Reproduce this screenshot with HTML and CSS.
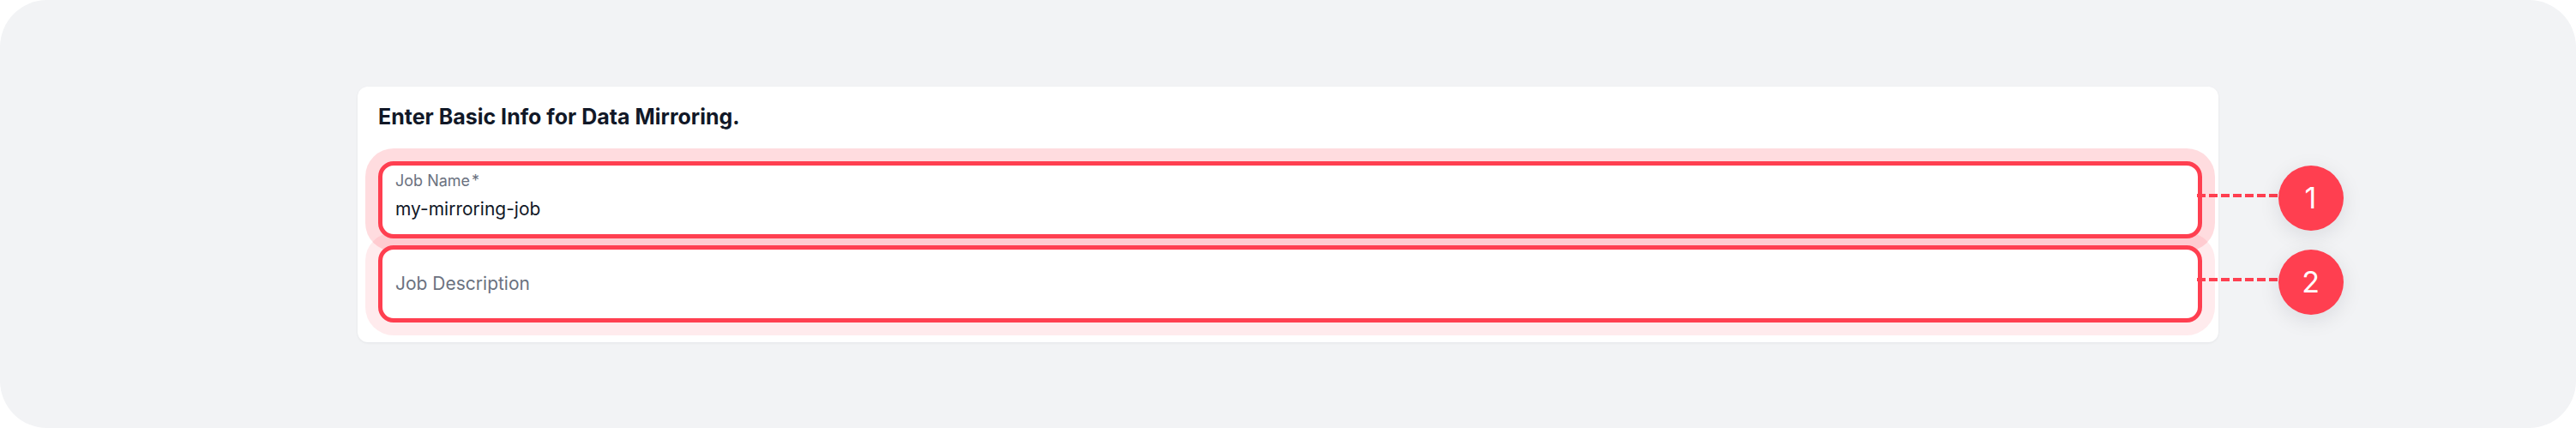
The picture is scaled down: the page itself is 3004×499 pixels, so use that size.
FILE: index.html
```html
<!DOCTYPE html>
<html lang="en">
<head>
<meta charset="utf-8">
<title>Enter Basic Info for Data Mirroring</title>
<link rel="stylesheet" href="styles.css">
</head>
<body>
<div class="screen">
  <div class="card">
    <h1 class="card-title">Enter Basic Info for Data Mirroring.</h1>
    <div class="fields">
      <div class="field-wrap ring-strong">
        <div class="field field-filled">
          <div class="field-label">Job Name<span class="req">*</span></div>
          <div class="field-value">my-mirroring-job</div>
        </div>
        <span class="callout-line"></span>
        <span class="callout-badge">1</span>
      </div>
      <div class="field-wrap ring-soft">
        <div class="field field-empty">
          <div class="field-placeholder">Job Description</div>
        </div>
        <span class="callout-line"></span>
        <span class="callout-badge">2</span>
      </div>
    </div>
  </div>
</div>
</body>
</html>
```
FILE: styles.css
```css
* { box-sizing: border-box; }

html, body {
  margin: 0;
  padding: 0;
  background: #ffffff;
}

body {
  font-family: Inter, "Noto Sans", "Liberation Sans", sans-serif;
}

.screen {
  width: 3004px;
  height: 499px;
  background: #f2f3f5;
  border-radius: 55px;
  display: flex;
  align-items: center;
  justify-content: center;
}

.card {
  width: 2170px;
  background: #ffffff;
  border-radius: 12px;
  box-shadow: 0 1px 3px rgba(17, 24, 39, 0.06);
  padding: 24px 19px 23px 24px;
}

.card-title {
  margin: 0;
  font-size: 25px;
  line-height: 22px;
  font-weight: 700;
  color: #111827;
}

.fields {
  margin-top: 41px;
  display: flex;
  flex-direction: column;
  gap: 8px;
}

.field-wrap {
  position: relative;
}

.field-wrap::before {
  content: "";
  position: absolute;
  left: -15px;
  right: -15px;
  top: -15px;
  bottom: -15px;
  border-radius: 33px;
}

.ring-strong::before { background: rgba(255, 63, 80, 0.18); }
.ring-soft::before { background: rgba(255, 63, 80, 0.1); }

.field {
  position: relative;
  z-index: 1;
  height: 90px;
  background: #ffffff;
  border: 5.5px solid #ff3f50;
  border-radius: 18px;
  padding: 0 15px;
}

.field-filled {
  padding-top: 8px;
}

.field-empty {
  display: flex;
  align-items: center;
}

.field-label {
  font-size: 18px;
  line-height: 20px;
  color: #6b7280;
}

.req {
  margin-left: 2px;
}

.field-value {
  margin-top: 9px;
  font-size: 21px;
  line-height: 28px;
  color: #111827;
}

.field-placeholder {
  font-size: 21px;
  line-height: 28px;
  color: #6b7280;
}

.callout-line {
  position: absolute;
  z-index: 2;
  left: calc(100% - 6px);
  top: 38px;
  width: 95px;
  height: 4px;
  background: repeating-linear-gradient(to right, #ff3f50 0 10px, transparent 10px 14px);
}

.callout-badge {
  position: absolute;
  z-index: 2;
  left: calc(100% + 88.5px);
  top: 5px;
  width: 76px;
  height: 76px;
  border-radius: 50%;
  background: #ff3f50;
  color: #ffffff;
  font-size: 34px;
  font-weight: 400;
  line-height: 1;
  display: flex;
  align-items: center;
  justify-content: center;
  box-shadow: 0 6px 24px rgba(17, 24, 39, 0.1);
}
```
